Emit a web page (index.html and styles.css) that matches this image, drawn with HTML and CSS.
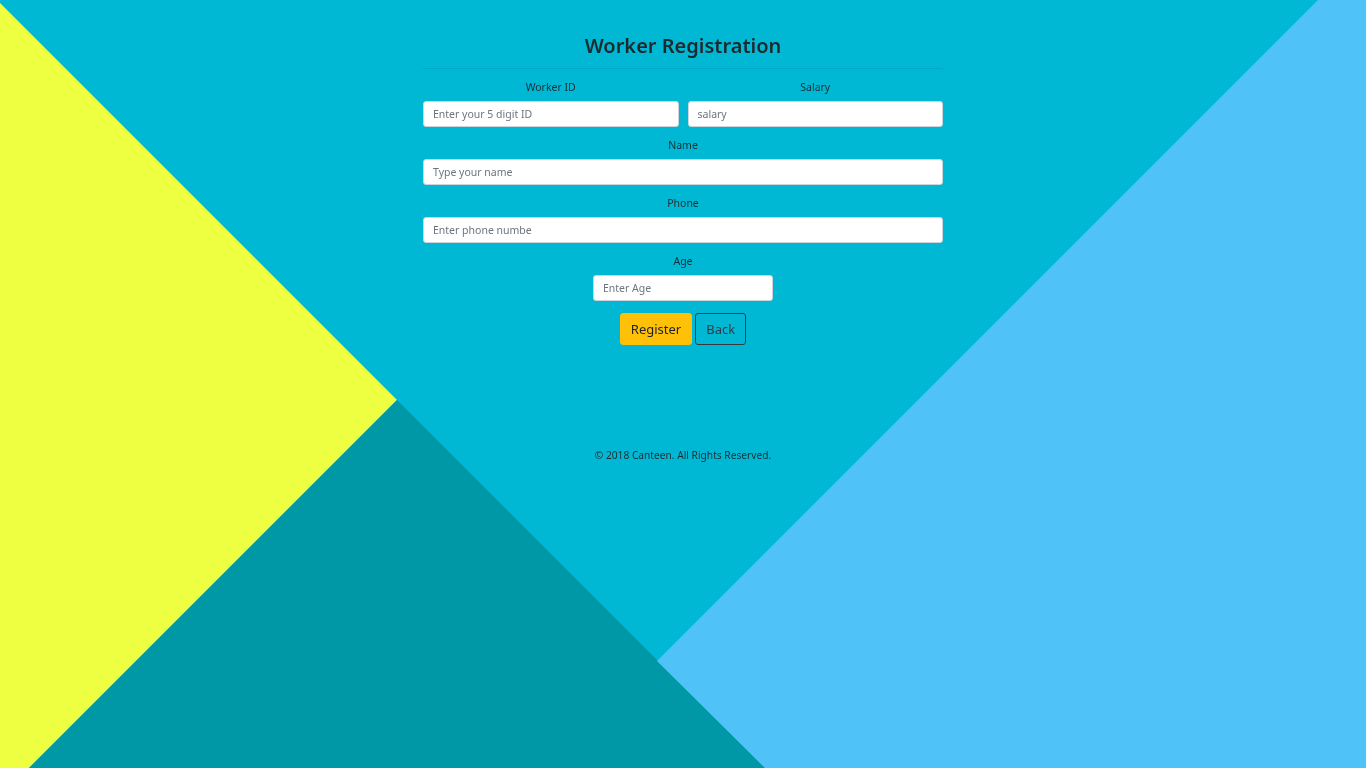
FILE: index.html
```html
<!DOCTYPE html>
<html lang="en">
<head>
<meta charset="utf-8">
<title>Worker Registration</title>
<link rel="stylesheet" href="styles.css">
</head>
<body>
<svg class="backdrop" viewBox="0 0 1366 768" preserveAspectRatio="none" aria-hidden="true">
  <rect x="0" y="0" width="1366" height="768" fill="#00b8d4"/>
  <polygon points="0,3 397,400 29,768 0,768" fill="#eeff41"/>
  <polygon points="397,400 765,768 29,768" fill="#0097a7"/>
  <polygon points="1318,0 1366,0 1366,768 765,768 657,661" fill="#4fc3f7"/>
</svg>
<main class="page">
  <form class="card">
    <h1 class="title">Worker Registration</h1>
    <hr class="rule">
    <div class="row">
      <div class="group">
        <label class="label" for="wid">Worker ID</label>
        <input class="field" id="wid" type="text" placeholder="Enter your 5 digit ID">
      </div>
      <div class="group">
        <label class="label" for="sal">Salary</label>
        <input class="field" id="sal" type="text" placeholder="salary">
      </div>
    </div>
    <div class="group">
      <label class="label" for="name">Name</label>
      <input class="field" id="name" type="text" placeholder="Type your name">
    </div>
    <div class="group">
      <label class="label" for="phone">Phone</label>
      <input class="field" id="phone" type="text" placeholder="Enter phone numbe">
    </div>
    <div class="group group-narrow">
      <label class="label" for="age">Age</label>
      <input class="field" id="age" type="text" placeholder="Enter Age">
    </div>
    <div class="actions">
      <button class="btn btn-register" type="button">Register</button>
      <button class="btn btn-back" type="button">Back</button>
    </div>
  </form>
  <footer class="footer">© 2018 Canteen. All Rights Reserved.</footer>
</main>
</body>
</html>
```
FILE: styles.css
```css
* { box-sizing: border-box; }
html, body { margin: 0; padding: 0; height: 100%; }
body {
  font-family: "Noto Sans", "Open Sans", sans-serif;
  color: #212529;
  overflow: hidden;
}
.backdrop {
  position: fixed;
  left: 0; top: 0;
  width: 100%; height: 100%;
  z-index: -1;
  display: block;
}
.page {
  width: 520px;
  margin: 0 auto;
  padding-top: 30px;
}
.card { display: flex; flex-direction: column; }
.title {
  margin: 0;
  font-size: 20px;
  line-height: 32px;
  font-weight: 600;
  text-align: center;
  color: #1e2a30;
}
.rule {
  margin: 6px 0 10px;
  border: 0;
  border-top: 1px solid rgba(0,0,0,0.08);
  height: 0;
}
.row { display: flex; gap: 9px; }
.row .group { flex: 1; }
.group {
  display: flex;
  flex-direction: column;
  align-items: center;
  margin-bottom: 10px;
}
.label {
  font-size: 10.5px;
  line-height: 16px;
  margin-bottom: 6px;
  color: #1f2d33;
}
.field {
  width: 100%;
  height: 26px;
  border: 1px solid #ced4da;
  border-radius: 3px;
  background: #fff;
  padding: 0 9px;
  font-family: inherit;
  font-size: 10.5px;
  color: #495057;
  outline: none;
}
.field::placeholder { color: #6c757d; }
.group-narrow .field { width: 180px; }
.actions {
  display: flex;
  justify-content: center;
  gap: 3px;
  margin-top: 2px;
}
.btn {
  height: 32px;
  border-radius: 3px;
  font-family: inherit;
  font-size: 13px;
  padding: 0 10px;
  cursor: pointer;
}
.btn-register {
  background: #ffc107;
  border: 1px solid #ffc107;
  color: #212529;
}
.btn-back {
  background: transparent;
  border: 1px solid #343a40;
  color: #343a40;
}
.footer {
  margin-top: 102px;
  text-align: center;
  font-size: 10.2px;
  line-height: 16px;
  color: #1f2d33;
}
```
